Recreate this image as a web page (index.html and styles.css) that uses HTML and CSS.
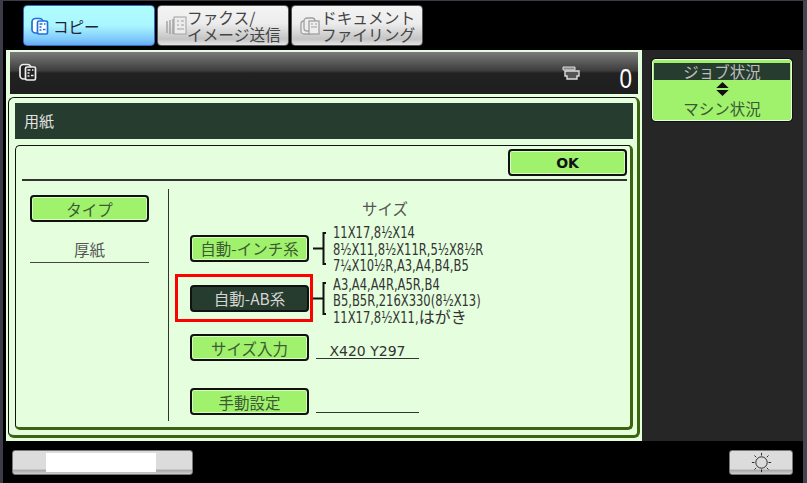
FILE: index.html
```html
<!DOCTYPE html>
<html lang="ja">
<head>
<meta charset="utf-8">
<title>用紙</title>
<link rel="stylesheet" href="styles.css">
</head>
<body>
<div class="screen">
  <nav class="tabs">
    <div class="tab tab-on">
      <svg class="tab-icon-on" viewBox="0 0 18 18"><rect x="1" y="1.500" width="11" height="14.500" rx="3.500" fill="#fff" stroke="#1b6fe0" stroke-width="1.700"/><rect x="6.500" y="4" width="10" height="13" rx="1.500" fill="#fff" stroke="#1b6fe0" stroke-width="1.700"/><path d="M8.500 7h3M8.500 10h2M13 7h1.500M12 12.500h2.500M8.500 13h2" stroke="#1b6fe0" stroke-width="1.400"/></svg>
      <span class="tab-single">コピー</span>
    </div>
    <div class="tab">
      <svg class="tab-icon" viewBox="0 0 22 20"><path d="M2 5v12M5 4v14M8 3v15" stroke="#a0a0a0" stroke-width="1.400" fill="none"/><rect x="9" y="1" width="12" height="17" fill="#ededed" stroke="#a0a0a0"/><path d="M12 5h2M16 5h3M12 9h2M16 9h3M12 13h7" stroke="#a0a0a0"/></svg>
      <span class="tab-text">ファクス/<br>イメージ送信</span>
    </div>
    <div class="tab">
      <svg class="tab-icon" viewBox="0 0 22 20"><rect x="2" y="5" width="11" height="13" rx="3" fill="#eee" stroke="#a0a0a0" stroke-width="1.300"/><rect x="5" y="2" width="11" height="13" rx="3" fill="#eee" stroke="#a0a0a0" stroke-width="1.300"/><rect x="10" y="5" width="10" height="13" fill="#eee" stroke="#a0a0a0" stroke-width="1.300"/><path d="M12 8h2M16 8h2M12 11h6" stroke="#a0a0a0"/></svg>
      <span class="tab-text">ドキュメント<br>ファイリング</span>
    </div>
  </nav>

  <div class="main">
    <div class="work">
      <header class="head">
        <svg class="head-icon" viewBox="0 0 18 18"><rect x="1" y="1.500" width="11" height="14.500" rx="3.500" fill="#222" stroke="#eee" stroke-width="1.700"/><rect x="6.500" y="4" width="10" height="13" rx="1.500" fill="#222" stroke="#eee" stroke-width="1.700"/><path d="M8.500 7h3M8.500 10h2M13 7h1.500M12 12.500h2.500M8.500 13h2" stroke="#eee" stroke-width="1.400"/></svg>
        <svg class="head-job" viewBox="0 0 18 14"><path d="M1 1h12v3H1z" fill="#888" stroke="#ddd"/><path d="M3 5h14v5h-2v3H5v-3H3z" fill="#555" stroke="#ddd" stroke-width="1.400"/></svg>
        <span class="head-count">0</span>
      </header>

      <section class="panel">
        <h1 class="title">用紙</h1>
        <div class="sheet">
          <div class="ok-row">
            <div class="btn btn-ok">OK</div>
          </div>
          <div class="body">
            <div class="type-col">
              <div class="btn btn-type">タイプ</div>
              <div class="type-value">厚紙</div>
            </div>
            <div class="size-col">
              <div class="size-title">サイズ</div>
              <div class="size-row row-a">
                <div class="btn btn-size">自動-インチ系</div>
                <svg class="bracket" viewBox="0 0 14 50"><path d="M0 25.500h10M13 10H10.500v31H13" fill="none" stroke="#111" stroke-width="2"/></svg>
                <div class="size-list">11X17,8½X14<br>8½X11,8½X11R,5½X8½R<br>7¼X10½R,A3,A4,B4,B5</div>
              </div>
              <div class="size-row row-b">
                <div class="btn btn-size btn-dark">自動-AB系</div>
                <svg class="bracket" viewBox="0 0 14 50"><path d="M0 25.500h10M13 10H10.500v31H13" fill="none" stroke="#111" stroke-width="2"/></svg>
                <div class="size-list">A3,A4,A4R,A5R,B4<br>B5,B5R,216X330(8½X13)<br>11X17,8½X11,<span class="kana">はがき</span></div>
                <div class="red-box"></div>
              </div>
              <div class="size-row row-c">
                <div class="btn btn-size">サイズ入力</div>
                <div class="size-value">X420 Y297</div>
              </div>
              <div class="size-row row-d">
                <div class="btn btn-size">手動設定</div>
                <div class="size-value"></div>
              </div>
            </div>
          </div>
        </div>
      </section>
    </div>

    <aside class="side">
      <div class="status">
        <div class="status-top">ジョブ状況</div>
        <svg class="status-arrows" viewBox="0 0 16 18"><path d="M8 1l7 7H1zM1 10h14l-7 7z" fill="#111"/></svg>
        <div class="status-bottom">マシン状況</div>
      </div>
    </aside>
  </div>

  <footer class="foot">
    <div class="foot-btn foot-wide"><div class="foot-white"></div></div>
    <div class="foot-btn foot-sun">
      <svg class="sun" viewBox="0 0 24 24"><circle cx="12" cy="12" r="6.500" fill="none" stroke="#111"/><path d="M12 1v3M12 20v3M1 12h3M20 12h3M4 4l2 2M18 18l2 2M20 4l-2 2M4 20l2-2" stroke="#111"/></svg>
    </div>
  </footer>
</div>
</body>
</html>
```
FILE: styles.css
```css
* { box-sizing: border-box; }
html, body { margin: 0; padding: 0; background: #000; }
body {
  width: 807px;
  height: 483px;
  overflow: hidden;
  font-family: "Noto Sans CJK JP", "Noto Sans", sans-serif;
}
.screen {
  width: 807px;
  height: 483px;
  background: #000;
  border-top: 1px solid #3c3c48;
  border-left: 3px solid #3c3c48;
  border-right: 4px solid #44444e;
  display: flex;
  flex-direction: column;
}
.tabs {
  display: flex;
  gap: 2px;
  height: 41px;
  margin: 4px 0 4px 20px;
}
.tab {
  width: 132px;
  height: 41px;
  display: flex;
  align-items: center;
  border: 1px solid #555;
  border-radius: 4px;
  background: linear-gradient(#f4f4f4 0, #ececec 45%, #c4c4c4 85%, #e4e4e4 100%);
  color: #444;
  padding-left: 7px;
}
.tab-on {
  background: linear-gradient(#b0fdff 0, #aaf6ff 50%, #7fc9fb 85%, #6aabf0 100%);
  border-color: #2f6fc4;
}
.tab-icon { width: 22px; height: 20px; flex: none; }
.tab-icon-on { width: 18px; height: 18px; flex: none; }
.tab-single { font-size: 15.5px; margin-left: 4px; color: #223; }
.tab-text { font-size: 15.7px; line-height: 17px; white-space: nowrap; }
.main { display: flex; height: 391px; margin-left: 3px; }
.work {
  width: 636px;
  flex: none;
  background: #e4fede;
  padding: 2px;
  display: flex;
  flex-direction: column;
  gap: 3px;
}
.head {
  margin: 0 2px;
  height: 42px;
  flex: none;
  background: linear-gradient(#7c7c7c 0, #3c3c3c 45%, #222 50%, #1e1e1e 100%);
  display: flex;
  align-items: center;
  padding: 0 4px 0 9px;
}
.head-icon { width: 18px; height: 18px; margin-top: -2px; }
.head-job { width: 18px; height: 14px; margin-left: auto; margin-top: 0; }
.head-count {
  color: #fff;
  font-family: "Liberation Sans", sans-serif;
  font-size: 28px;
  line-height: 28px;
  margin: 12px 0 0 38px;
  transform: scaleX(.8);
}
.panel {
  flex: none;
  height: 341px;
  border: 1px solid #111;
  border-right: 3px solid #3c6410;
  border-bottom: 3px solid #3c6410;
  border-radius: 6px;
  padding: 5px 4px 5px 6px;
  display: flex;
  flex-direction: column;
  gap: 6px;
}
.title {
  margin: 0;
  height: 36px;
  flex: none;
  background: #263c2e;
  color: #e2e2e2;
  font-size: 15px;
  font-weight: 400;
  line-height: 36px;
  padding-left: 9px;
}
.sheet {
  flex: 1;
  border: 1px solid #111;
  border-right: 3px solid #3c6410;
  border-bottom: 3px solid #3c6410;
  border-radius: 5px;
  padding: 3px 3px 0 6px;
  display: flex;
  flex-direction: column;
}
.ok-row {
  display: flex;
  justify-content: flex-end;
  height: 32px;
  padding-bottom: 3px;
  border-bottom: 2px solid #333;
  flex: none;
}
.btn {
  border: 2px solid #111;
  border-radius: 4px;
  background: #a0f26c;
  box-shadow: inset 0 0 0 1px #d6fcc2;
  color: #3c5a34;
  display: flex;
  align-items: center;
  justify-content: center;
  white-space: nowrap;
  font-size: 15.5px;
}
.btn-ok {
  width: 119px;
  height: 27px;
  color: #111;
  font-family: "DejaVu Sans", sans-serif;
  font-weight: 700;
  font-size: 14px;
}
.body { display: flex; margin-top: 8px; height: 232px; }
.type-col { width: 146px; padding-left: 8px; flex: none; }
.btn-type { width: 119px; height: 27px; margin-top: 6px; }
.type-value {
  width: 119px;
  height: 29px;
  margin-top: 12px;
  border-bottom: 1px solid #444;
  text-align: center;
  font-size: 15.5px;
  line-height: 30px;
  color: #555;
}
.size-col {
  flex: 1;
  border-left: 1px solid #333;
  padding-left: 21px;
}
.size-title {
  width: 198px;
  margin-left: 96px;
  height: 20px;
  margin-top: 9px;
  text-align: center;
  font-size: 15.5px;
  line-height: 20px;
  color: #555;
}
.size-row { display: flex; align-items: center; }
.row-a { height: 50px; margin-top: 5px; }
.row-b { height: 50px; position: relative; }
.row-c { height: 27px; margin-top: 11px; }
.row-d { height: 27px; margin-top: 27px; }
.btn-size { width: 119px; height: 27px; flex: none; }
.btn-dark { background: #263c2e; color: #d4d4d4; box-shadow: none; }
.bracket { width: 14px; height: 50px; flex: none; margin-left: 4px; }
.size-list {
  margin: 4px 0 0 6px;
  font-family: "DejaVu Sans", "Noto Sans CJK JP", sans-serif;
  font-size: 16px;
  line-height: 16.5px;
  color: #333;
  white-space: nowrap;
  transform: scaleX(.72);
  transform-origin: left center;
}
.row-b .size-list { margin-top: 7px; }
.kana {
  display: inline-block;
  transform: scaleX(1.39);
  transform-origin: left center;
}
.size-value {
  width: 103px;
  height: 27px;
  margin-left: 7px;
  border-bottom: 1px solid #333;
  font-family: "DejaVu Sans", sans-serif;
  font-size: 14px;
  line-height: 38px;
  text-align: center;
  color: #333;
  transform: translateY(-2px);
}
.red-box {
  position: absolute;
  left: -15px;
  top: 1px;
  width: 138px;
  height: 48px;
  border: 3px solid #f00;
}
.side { flex: 1; background: #262626; padding: 9px 10px; }
.status {
  width: 140px;
  height: 62px;
  border: 1px solid #e8fee0;
  outline: 1px solid #111;
  border-radius: 3px;
  background: #a0f26c;
  padding: 3px 1px 0;
  color: #3c5a34;
  text-align: center;
  overflow: hidden;
  display: flex;
  flex-direction: column;
  align-items: center;
}
.status-top {
  width: 100%;
  height: 17px;
  flex: none;
  background: #263c2e;
  color: #bcbcbc;
  font-size: 15.5px;
  line-height: 17px;
}
.status-arrows { width: 15px; height: 16px; margin-top: 1px; flex: none; }
.status-bottom { height: 20px; line-height: 20px; margin-top: 1px; font-size: 15.5px; flex: none; }
.foot { display: flex; justify-content: space-between; padding: 9px 10px 0 9px; }
.foot-btn {
  height: 25px;
  border: 1px solid #777;
  border-radius: 3px;
  background: linear-gradient(#dcdcdc 0, #dcdcdc 78%, #a8a8a8 84%, #d0d0d0 100%);
}
.foot-wide { width: 181px; padding: 2px 0 0 33px; }
.foot-white { width: 110px; height: 19px; background: #fff; }
.foot-sun { width: 64px; display: flex; align-items: center; justify-content: center; }
.sun { width: 21px; height: 21px; }
```
